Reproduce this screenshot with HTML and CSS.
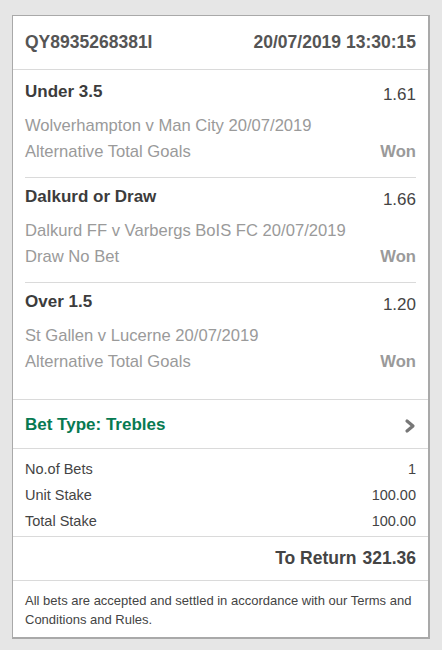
FILE: index.html
```html
<!DOCTYPE html>
<html lang="en">
<head>
    <meta charset="UTF-8">
    <meta name="viewport" content="width=device-width, initial-scale=1.0">
    <title>Bet Receipt</title>
    <link rel="stylesheet" href="styles.css">
</head>
<body>
    <div class="receipt">
        <div class="receipt-head">
            <span>QY8935268381I</span>
            <span>20/07/2019 13:30:15</span>
        </div>

        <div class="bets">
            <div class="bet first">
                <div class="bet-head">
                    <span class="bet-name">Under 3.5</span>
                    <span class="bet-odds">1.61</span>
                </div>
                <div class="bet-line">Wolverhampton v Man City 20/07/2019</div>
                <div class="bet-line">
                    <span>Alternative Total Goals</span>
                    <span class="result">Won</span>
                </div>
            </div>
            <div class="bet">
                <div class="bet-head">
                    <span class="bet-name">Dalkurd or Draw</span>
                    <span class="bet-odds">1.66</span>
                </div>
                <div class="bet-line">Dalkurd FF v Varbergs BoIS FC 20/07/2019</div>
                <div class="bet-line">
                    <span>Draw No Bet</span>
                    <span class="result">Won</span>
                </div>
            </div>
            <div class="bet">
                <div class="bet-head">
                    <span class="bet-name">Over 1.5</span>
                    <span class="bet-odds">1.20</span>
                </div>
                <div class="bet-line">St Gallen v Lucerne 20/07/2019</div>
                <div class="bet-line">
                    <span>Alternative Total Goals</span>
                    <span class="result">Won</span>
                </div>
            </div>
        </div>

        <div class="bet-type">
            <span>Bet Type: Trebles</span>
            <svg width="12" height="16" viewBox="0 0 12 16">
                <path d="M3 3 L9 8 L3 13" fill="none" stroke="#777" stroke-width="3.2" stroke-linecap="round" stroke-linejoin="round"/>
            </svg>
        </div>

        <div class="stakes">
            <div class="stake-row"><span>No.of Bets</span><span>1</span></div>
            <div class="stake-row"><span>Unit Stake</span><span>100.00</span></div>
            <div class="stake-row"><span>Total Stake</span><span>100.00</span></div>
        </div>

        <div class="to-return">
            <span>To Return</span>
            <span>321.36</span>
        </div>

        <p class="terms">All bets are accepted and settled in accordance with our Terms and Conditions and Rules.</p>
    </div>
</body>
</html>
```

FILE: styles.css
```css
body {
    margin: 0;
    padding: 15px 12px 10px;
    background-color: #e6e6e6;
    font-family: "Liberation Sans", Arial, sans-serif;
    color: #444;
}
.receipt {
    background-color: #fff;
    border: 1px solid #a9a9a9;
    border-right-width: 2px;
    border-bottom-width: 2px;
}
.receipt-head {
    display: flex;
    justify-content: space-between;
    padding: 15px 12px 16px;
    font-size: 17.5px;
    font-weight: bold;
    line-height: 22px;
    color: #555;
    border-bottom: 1px solid #dadada;
}
.bets {
    padding: 0 12px 12px;
    border-bottom: 1px solid #dadada;
}
.bet {
    padding: 8px 0 12px;
    border-bottom: 1px solid #dadada;
}
.bet.first {
    padding-top: 11px;
}
.bet:last-child {
    border-bottom: none;
}
.bet-head {
    display: flex;
    justify-content: space-between;
    font-size: 17px;
    line-height: 22px;
}
.bet-name {
    font-weight: bold;
    color: #3c3c3c;
}
.bet-odds {
    margin-top: 3px;
    margin-bottom: -3px;
    color: #444;
}
.bet-line {
    display: flex;
    justify-content: space-between;
    font-size: 16.6px;
    line-height: 26px;
    color: #9a9a9a;
}
.bet-head + .bet-line {
    margin-top: 10px;
}
.result {
    font-weight: bold;
    color: #9a9a9a;
}
.bet-type {
    display: flex;
    justify-content: space-between;
    align-items: center;
    padding: 14px 12px 12px;
    font-size: 17px;
    font-weight: bold;
    line-height: 22px;
    color: #077a52;
    border-bottom: 1px solid #dadada;
}
.bet-type svg {
    margin-top: 2px;
}
.stakes {
    padding: 7px 12px 2px;
    border-bottom: 1px solid #dadada;
}
.stake-row {
    display: flex;
    justify-content: space-between;
    font-size: 14.5px;
    line-height: 26px;
    color: #444;
}
.to-return {
    display: flex;
    justify-content: flex-end;
    gap: 6px;
    padding: 10px 12px;
    font-size: 17.5px;
    font-weight: bold;
    line-height: 23px;
    color: #444;
    border-bottom: 1px solid #dadada;
}
.terms {
    margin: 0;
    padding: 10px 12px 8px;
    font-size: 13px;
    line-height: 19px;
    color: #444;
}
```
